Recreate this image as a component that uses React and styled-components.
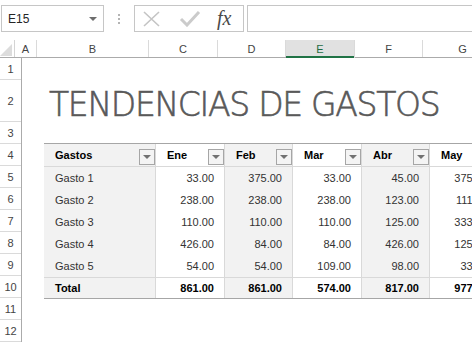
import React from 'react';
import styled, { createGlobalStyle } from 'styled-components';

const GlobalStyle = createGlobalStyle`
  body {
    margin: 0;
    background: #ffffff;
    font-family: 'Liberation Sans', Arial, sans-serif;
  }
`;

const columns = [
  { key: 'A', width: 22 },
  { key: 'B', width: 112 },
  { key: 'C', width: 69 },
  { key: 'D', width: 68 },
  { key: 'E', width: 69, active: true },
  { key: 'F', width: 68 },
  { key: 'G', width: 80 },
];

const tableCols = [
  { label: 'Gastos', width: 111, band: true },
  { label: 'Ene', width: 69 },
  { label: 'Feb', width: 68, band: true },
  { label: 'Mar', width: 69 },
  { label: 'Abr', width: 68, band: true },
  { label: 'May', width: 69 },
];

const rows = [
  ['Gasto 1', '33.00', '375.00', '33.00', '45.00', '375.00'],
  ['Gasto 2', '238.00', '238.00', '238.00', '123.00', '111.00'],
  ['Gasto 3', '110.00', '110.00', '110.00', '125.00', '333.00'],
  ['Gasto 4', '426.00', '84.00', '84.00', '426.00', '125.00'],
  ['Gasto 5', '54.00', '54.00', '109.00', '98.00', '33.00'],
];

const totals = ['Total', '861.00', '861.00', '574.00', '817.00', '977.00'];

const rowHeights = [22, 42, 22, 22, 22, 22, 22, 22, 22, 22, 22, 22];

const App = () => {
  return (
    <>
      <GlobalStyle />
      <Page>
        <Toolbar>
          <NameBox>
            <span>E15</span>
            <NameArrow />
          </NameBox>
          <Grip>
            <i />
            <i />
            <i />
          </Grip>
          <FormulaButtons>
            <svg width='20' height='16' viewBox='0 0 20 16'>
              <path d='M2 1 L17 15 M17 1 L2 15' stroke='#c4c4c4' strokeWidth='1.6' fill='none' />
            </svg>
            <svg width='22' height='16' viewBox='0 0 22 16'>
              <path d='M2 8 L8 14 L20 1' stroke='#cbcbcb' strokeWidth='3' fill='none' />
            </svg>
            <Fx>fx</Fx>
          </FormulaButtons>
          <FormulaInput />
        </Toolbar>

        <ColumnHeaders>
          <Corner>
            <svg width='12' height='12' viewBox='0 0 12 12'>
              <path d='M12 0 L12 12 L0 12 Z' fill='#dcdcdc' />
            </svg>
          </Corner>
          {columns.map((c) => (
            <ColHead key={c.key} $w={c.width} $active={c.active}>
              {c.key}
            </ColHead>
          ))}
        </ColumnHeaders>

        <Body>
          <RowHeads>
            {rowHeights.map((h, i) => (
              <RowHead key={i} $h={h}>
                {i + 1}
              </RowHead>
            ))}
          </RowHeads>

          <Canvas>
            <TitleRow>
              <Title>TENDENCIAS DE GASTOS</Title>
            </TitleRow>

            <Table>
              <HeaderRow>
                {tableCols.map((c, i) => (
                  <HeadCell key={c.label} $w={c.width} $band={c.band} $first={i === 0}>
                    {c.label}
                    <FilterButton />
                  </HeadCell>
                ))}
              </HeaderRow>
              {rows.map((r) => (
                <DataRow key={r[0]}>
                  {r.map((v, i) => (
                    <Cell
                      key={i}
                      $w={tableCols[i].width}
                      $band={tableCols[i].band}
                      $first={i === 0}
                    >
                      {v}
                    </Cell>
                  ))}
                </DataRow>
              ))}
              <TotalRow>
                {totals.map((v, i) => (
                  <Cell
                    key={i}
                    $w={tableCols[i].width}
                    $band={tableCols[i].band}
                    $first={i === 0}
                    $bold
                  >
                    {v}
                  </Cell>
                ))}
              </TotalRow>
            </Table>
          </Canvas>
        </Body>
      </Page>
    </>
  );
};

const Page = styled.div`
  width: 472px;
  height: 345px;
  overflow: hidden;
  background: #ffffff;
`;

const Toolbar = styled.div`
  height: 40px;
  box-sizing: border-box;
  padding: 5px 0 0 1px;
  display: flex;
  align-items: flex-start;
`;

const NameBox = styled.div`
  width: 103px;
  height: 27px;
  box-sizing: border-box;
  border: 1px solid #c6c6c6;
  display: flex;
  align-items: center;
  justify-content: space-between;
  padding: 0 6px 0 6px;
  font-size: 12px;
  color: #262626;
`;

const NameArrow = styled.span`
  width: 0;
  height: 0;
  border-left: 4px solid transparent;
  border-right: 4px solid transparent;
  border-top: 4px solid #6d6d6d;
`;

const Grip = styled.div`
  width: 30px;
  height: 27px;
  display: flex;
  flex-direction: column;
  align-items: center;
  justify-content: center;
  gap: 2px;
  i {
    width: 2px;
    height: 2px;
    background: #b4b4b4;
  }
`;

const FormulaButtons = styled.div`
  width: 110px;
  height: 27px;
  box-sizing: border-box;
  border: 1px solid #c6c6c6;
  display: flex;
  align-items: center;
  gap: 17px;
  padding-left: 7px;
`;

const Fx = styled.span`
  font-family: 'Liberation Serif', 'Times New Roman', serif;
  font-style: italic;
  font-size: 20px;
  color: #4a4a4a;
  margin-left: -1px;
`;

const FormulaInput = styled.div`
  flex: 1;
  margin-left: 3px;
  height: 27px;
  box-sizing: border-box;
  border: 1px solid #c6c6c6;
  border-right: none;
`;

const ColumnHeaders = styled.div`
  display: flex;
  height: 18px;
  box-sizing: border-box;
  border-bottom: 1px solid #ababab;
`;

const Corner = styled.div`
  width: 22px;
  box-sizing: border-box;
  border-right: 1px solid #d4d4d4;
  display: flex;
  align-items: flex-end;
  justify-content: flex-end;
  padding: 0 2px 1px 0;
`;

const ColHead = styled.div`
  flex: none;
  width: ${(p) => p.$w}px;
  box-sizing: border-box;
  border-right: 1px solid #dadada;
  display: flex;
  align-items: center;
  justify-content: center;
  font-size: 11px;
  color: ${(p) => (p.$active ? '#1e6b41' : '#444444')};
  background: ${(p) => (p.$active ? '#e1e1e1' : '#ffffff')};
  box-shadow: ${(p) => (p.$active ? 'inset 0 -2px 0 #217346' : 'none')};
  margin-bottom: ${(p) => (p.$active ? '-1px' : '0')};
`;

const Body = styled.div`
  display: flex;
`;

const RowHeads = styled.div`
  width: 22px;
  flex: none;
  box-sizing: border-box;
  border-right: 1px solid #ababab;
  display: flex;
  flex-direction: column;
`;

const RowHead = styled.div`
  height: ${(p) => p.$h}px;
  box-sizing: border-box;
  border-bottom: 1px solid #dadada;
  display: flex;
  align-items: center;
  justify-content: center;
  font-size: 11px;
  color: #444444;
`;

const Canvas = styled.div`
  flex: 1;
  padding: 22px 0 0 22px;
`;

const TitleRow = styled.div`
  height: 63px;
  box-sizing: border-box;
  padding: 8px 0 0 5px;
`;

const Title = styled.div`
  font-family: 'DejaVu Sans', 'Liberation Sans', sans-serif;
  font-weight: 200;
  font-size: 33px;
  letter-spacing: -1.3px;
  color: #595959;
  -webkit-text-stroke: 0.6px #595959;
  line-height: 34px;
  white-space: nowrap;
`;

const Table = styled.div`
  border-top: 1px solid #a6a6a6;
  border-bottom: 1px solid #a6a6a6;
  width: 600px;
  font-size: 11px;
`;

const HeaderRow = styled.div`
  display: flex;
  height: 22px;
  border-bottom: 1px solid #d9d9d9;
`;

const DataRow = styled.div`
  display: flex;
  height: 22px;
`;

const TotalRow = styled.div`
  display: flex;
  height: 20px;
  border-top: 1px solid #d9d9d9;
`;

const HeadCell = styled.div`
  position: relative;
  flex: none;
  width: ${(p) => p.$w}px;
  box-sizing: border-box;
  border-left: ${(p) => (p.$first ? 'none' : '1px solid #d9d9d9')};
  background: ${(p) => (p.$band ? '#f2f2f2' : '#ffffff')};
  display: flex;
  align-items: center;
  padding-left: 11px;
  font-weight: bold;
  color: #000000;
`;

const FilterButton = styled.span`
  position: absolute;
  right: 0;
  bottom: 1px;
  width: 16px;
  height: 16px;
  box-sizing: border-box;
  border: 1px solid #a6a6a6;
  background: #f4f4f4;
  display: flex;
  align-items: center;
  justify-content: center;
  &::after {
    content: '';
    border-left: 4px solid transparent;
    border-right: 4px solid transparent;
    border-top: 4px solid #727272;
  }
`;

const Cell = styled.div`
  flex: none;
  width: ${(p) => p.$w}px;
  box-sizing: border-box;
  border-left: ${(p) => (p.$first ? 'none' : '1px solid #d9d9d9')};
  background: ${(p) => (p.$band ? '#f2f2f2' : '#ffffff')};
  display: flex;
  align-items: center;
  justify-content: ${(p) => (p.$first ? 'flex-start' : 'flex-end')};
  padding: ${(p) => (p.$first ? '0 0 0 11px' : '0 10px 0 0')};
  font-weight: ${(p) => (p.$bold ? 'bold' : 'normal')};
  color: ${(p) => (p.$bold ? '#000000' : '#333333')};
`;

export default App;
